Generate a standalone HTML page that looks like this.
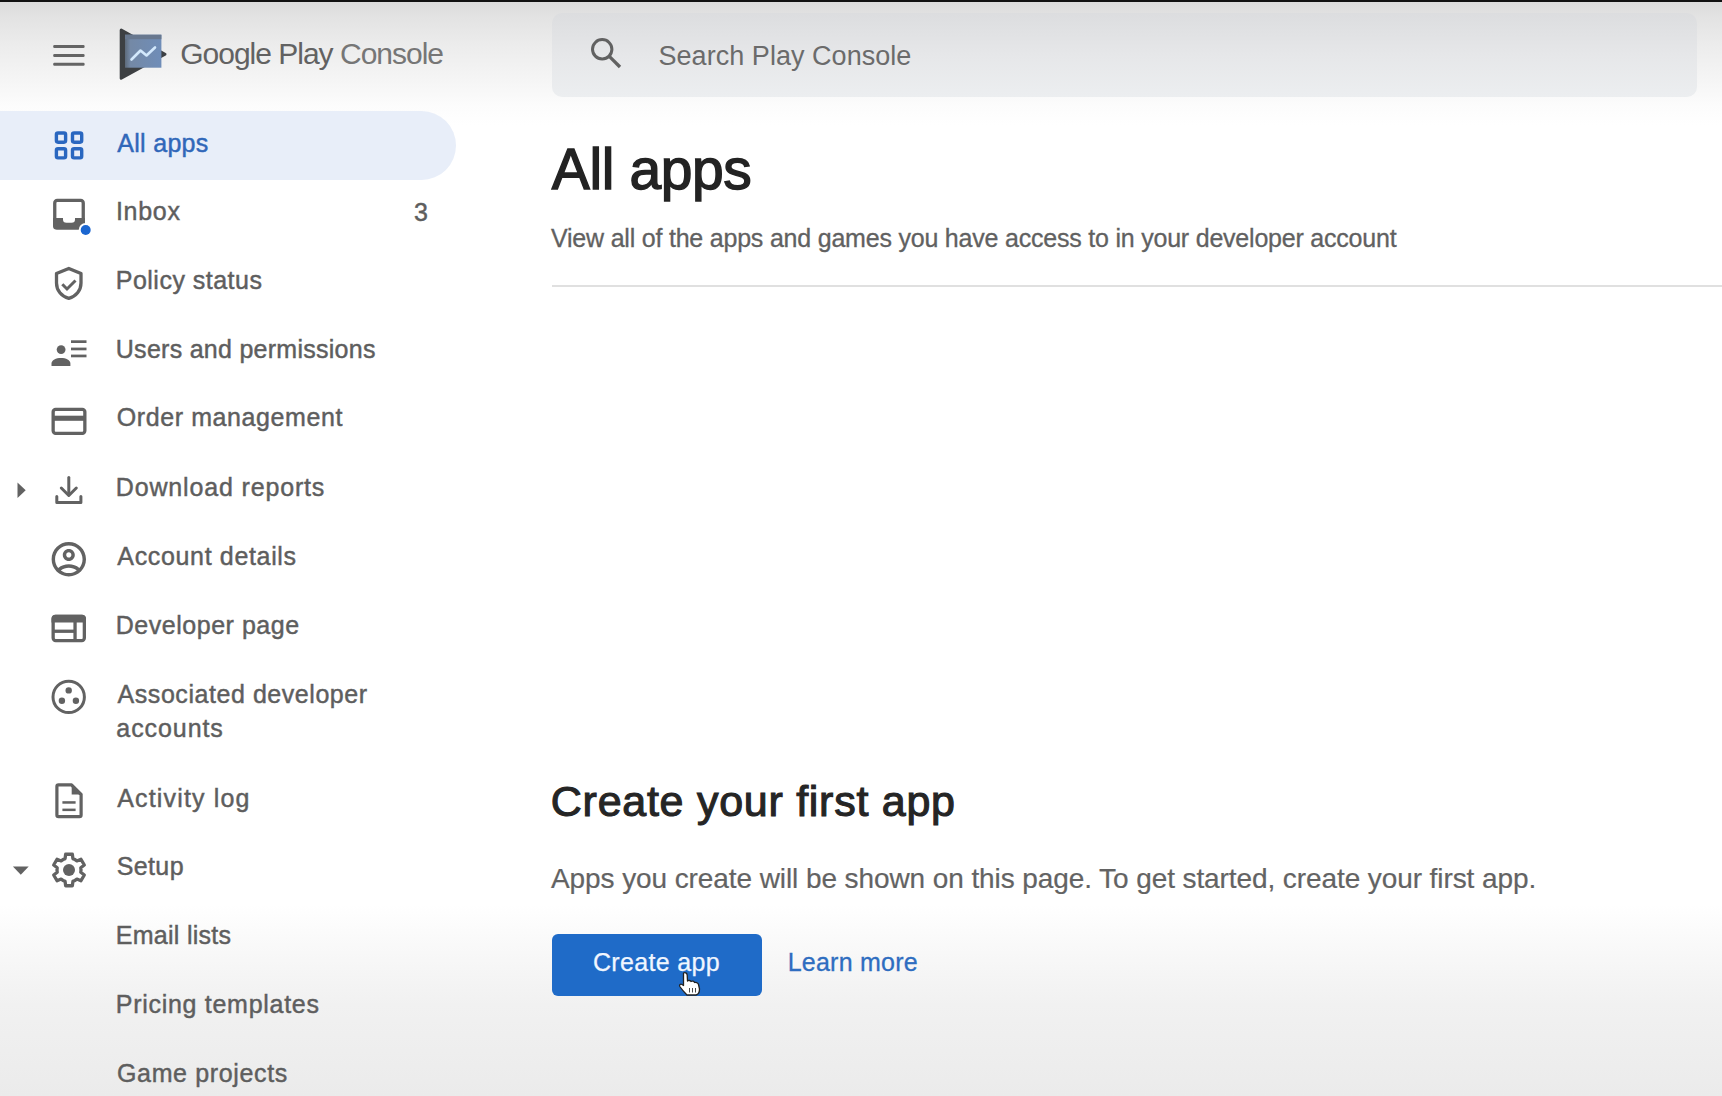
<!DOCTYPE html>
<html><head><meta charset="utf-8">
<style>
html,body{margin:0;padding:0;}
body{width:1722px;height:1096px;position:relative;overflow:hidden;background:#fff;font-family:"Liberation Sans",sans-serif;}
.t{position:absolute;white-space:nowrap;line-height:1;}
#topgrad{position:absolute;left:0;top:0;width:1722px;height:125px;background:linear-gradient(to bottom,#dadada 0px,#e2e2e2 15px,#ececec 45px,#f5f5f5 80px,#fcfcfc 105px,#ffffff 125px);}
#botgrad{position:absolute;left:0;top:905px;width:1722px;height:191px;background:linear-gradient(to bottom,#ffffff 0px,#f9f9f9 40px,#f1f1f1 100px,#ebebeb 191px);}
#topline{position:absolute;left:0;top:0;width:1722px;height:2px;background:#111;}
#search{position:absolute;left:552px;top:13px;width:1145px;height:84px;border-radius:10px;background:linear-gradient(to bottom,#dcdddf,#e6e7e9 50%,#eceef0);}
#pill{position:absolute;left:0;top:111px;width:456px;height:69px;border-radius:0 35px 35px 0;background:#e8eef9;}
#divider{position:absolute;left:552px;top:285px;width:1170px;height:2px;background:#e0e0e0;}
#btn{position:absolute;left:552px;top:934px;width:210px;height:62px;border-radius:6px;background:#1f6bc8;}
svg{position:absolute;left:0;top:0;}
</style></head><body>
<div id="topgrad"></div>
<div id="botgrad"></div>
<div id="topline"></div>
<div id="search"></div>
<div id="pill"></div>
<div id="divider"></div>
<div id="btn"></div>
<div class="t" style="left:117.3px;top:130.7px;font-size:25px;letter-spacing:0.29px;color:#3067b9;-webkit-text-stroke:0.45px #3067b9">All apps</div>
<div class="t" style="left:115.9px;top:199.0px;font-size:25px;letter-spacing:0.73px;color:#5e5e5e;-webkit-text-stroke:0.45px #5e5e5e">Inbox</div>
<div class="t" style="left:413.9px;top:199.5px;font-size:25px;letter-spacing:0px;color:#5e5e5e;-webkit-text-stroke:0.45px #5e5e5e">3</div>
<div class="t" style="left:115.8px;top:267.7px;font-size:25px;letter-spacing:0.48px;color:#5e5e5e;-webkit-text-stroke:0.45px #5e5e5e">Policy status</div>
<div class="t" style="left:115.8px;top:336.9px;font-size:25px;letter-spacing:0.27px;color:#5e5e5e;-webkit-text-stroke:0.45px #5e5e5e">Users and permissions</div>
<div class="t" style="left:116.8px;top:405.4px;font-size:25px;letter-spacing:0.59px;color:#5e5e5e;-webkit-text-stroke:0.45px #5e5e5e">Order management</div>
<div class="t" style="left:115.8px;top:475.4px;font-size:25px;letter-spacing:0.84px;color:#5e5e5e;-webkit-text-stroke:0.45px #5e5e5e">Download reports</div>
<div class="t" style="left:117.3px;top:544.2px;font-size:25px;letter-spacing:0.66px;color:#5e5e5e;-webkit-text-stroke:0.45px #5e5e5e">Account details</div>
<div class="t" style="left:115.8px;top:612.6px;font-size:25px;letter-spacing:0.52px;color:#5e5e5e;-webkit-text-stroke:0.45px #5e5e5e">Developer page</div>
<div class="t" style="left:117.6px;top:681.5px;font-size:25px;letter-spacing:0.55px;color:#5e5e5e;-webkit-text-stroke:0.45px #5e5e5e">Associated developer</div>
<div class="t" style="left:116.3px;top:716.4px;font-size:25px;letter-spacing:0.93px;color:#5e5e5e;-webkit-text-stroke:0.45px #5e5e5e">accounts</div>
<div class="t" style="left:117.3px;top:785.7px;font-size:25px;letter-spacing:1.15px;color:#5e5e5e;-webkit-text-stroke:0.45px #5e5e5e">Activity log</div>
<div class="t" style="left:116.8px;top:854.2px;font-size:25px;letter-spacing:0.35px;color:#5e5e5e;-webkit-text-stroke:0.45px #5e5e5e">Setup</div>
<div class="t" style="left:115.7px;top:923.0px;font-size:25px;letter-spacing:0.29px;color:#5e5e5e;-webkit-text-stroke:0.45px #5e5e5e">Email lists</div>
<div class="t" style="left:115.8px;top:992.1px;font-size:25px;letter-spacing:0.71px;color:#5e5e5e;-webkit-text-stroke:0.45px #5e5e5e">Pricing templates</div>
<div class="t" style="left:117.0px;top:1061.0px;font-size:25px;letter-spacing:0.65px;color:#5e5e5e;-webkit-text-stroke:0.45px #5e5e5e">Game projects</div>
<div class="t" style="left:551.8px;top:141.2px;font-size:57px;letter-spacing:-0.4px;color:#232323;-webkit-text-stroke:1.4px #232323">All apps</div>
<div class="t" style="left:551.0px;top:226.2px;font-size:25px;letter-spacing:-0.21px;color:#616161;-webkit-text-stroke:0.3px #616161">View all of the apps and games you have access to in your developer account</div>
<div class="t" style="left:550.8px;top:780.3px;font-size:43px;letter-spacing:0.73px;color:#252525;-webkit-text-stroke:1.1px #252525">Create your first app</div>
<div class="t" style="left:551.0px;top:864.9px;font-size:28px;letter-spacing:-0.09px;color:#636363;-webkit-text-stroke:0.2px #636363">Apps you create will be shown on this page. To get started, create your first app.</div>
<div class="t" style="left:592.9px;top:950.1px;font-size:25px;letter-spacing:0.33px;color:#f0f6ff;-webkit-text-stroke:0.25px #f0f6ff">Create app</div>
<div class="t" style="left:787.7px;top:950.0px;font-size:25px;letter-spacing:0.23px;color:#2e6dc0;-webkit-text-stroke:0.3px #2e6dc0">Learn more</div>
<div class="t" style="left:180.2px;top:38.7px;font-size:30px;letter-spacing:-1.0px;color:#626262;-webkit-text-stroke:0px #626262">Google Play <span style="color:#767676;-webkit-text-stroke:0px">Console</span></div>
<div class="t" style="left:658.5px;top:42.6px;font-size:27px;letter-spacing:0.04px;color:#6b6b6b;-webkit-text-stroke:0px #6b6b6b">Search Play Console</div>

<svg width="1722" height="1096" viewBox="0 0 1722 1096">
<g fill="#646464">
<rect x="53.2" y="45" width="31.4" height="3" rx="1.2"/>
<rect x="53.2" y="54" width="31.4" height="3" rx="1.2"/>
<rect x="53.2" y="62.7" width="31.4" height="3" rx="1.2"/>
</g>
<!-- logo -->
<defs><linearGradient id="lg" x1="0" x2="1" y1="0" y2="0"><stop offset="0" stop-color="#5d6a7a"/><stop offset="0.15" stop-color="#7489a6"/><stop offset="1" stop-color="#6f8db8"/></linearGradient></defs>
<polygon points="121.2,30 165,54.2 121.2,78.3" fill="#3d4043" stroke="#3d4043" stroke-width="3" stroke-linejoin="round"/>
<rect x="125" y="34.7" width="36.4" height="33" fill="url(#lg)"/>
<rect x="125" y="34.7" width="36.4" height="4.5" fill="#68788f"/>
<polyline points="131.5,59.5 140.5,50.5 146.5,55.5 155,47.5" fill="none" stroke="#d2e8fc" stroke-width="2.6" stroke-linejoin="round" stroke-linecap="round"/>
<!-- search -->
<circle cx="602.2" cy="49.3" r="9.7" fill="none" stroke="#616161" stroke-width="3"/>
<line x1="609.3" y1="56.4" x2="620" y2="67" stroke="#616161" stroke-width="3.3"/>
<!-- all apps grid -->
<g fill="none" stroke="#2a67c0" stroke-width="3.4">
<rect x="56.4" y="133" width="9.2" height="9.2" rx="1.6"/>
<rect x="72.5" y="133" width="9.2" height="9.2" rx="1.6"/>
<rect x="56.4" y="148.7" width="9.2" height="9.2" rx="1.6"/>
<rect x="72.5" y="148.7" width="9.2" height="9.2" rx="1.6"/>
</g>
<g fill="#626262" stroke="#626262">
<!-- inbox -->
<rect x="54.75" y="200.45" width="28.5" height="27.3" rx="2.5" fill="none" stroke-width="3.3"/>
<path d="M53.1 217.9 H63 V219.5 Q63 222.8 66.5 222.8 H71.5 Q75 222.8 75 219.5 V217.9 H84.9 V226.4 Q84.9 229.4 81.9 229.4 H56.1 Q53.1 229.4 53.1 226.4 Z" stroke="none"/>
<circle cx="85.7" cy="230" r="7" fill="#fff" stroke="none"/>
<circle cx="85.7" cy="230" r="5" fill="#1b66d0" stroke="none"/>
<!-- shield -->
<path d="M68.8 268.4 L56.5 273.6 V283 C56.5 290.5 61.5 296.5 68.8 298.3 C76 296.5 81 290.5 81 283 V273.6 Z" fill="none" stroke-width="3.3" stroke-linejoin="round"/>
<polyline points="62.3,284.3 67,289 75.5,280.5" fill="none" stroke-width="3"/>
<!-- users -->
<circle cx="61.1" cy="349.6" r="4.4" stroke="none"/>
<path d="M51.5 366 V363.5 C51.5 359.8 56 357.9 61 357.9 C66 357.9 70.4 359.8 70.4 363.5 V366 Z" stroke="none"/>
<rect x="71" y="340.3" width="15.5" height="2.7" stroke="none"/>
<rect x="71" y="347.6" width="15.5" height="2.7" stroke="none"/>
<rect x="71" y="354.6" width="15.5" height="2.7" stroke="none"/>
<!-- card -->
<rect x="53.15" y="409.35" width="31.7" height="24" rx="2.5" fill="none" stroke-width="3.3"/>
<rect x="52" y="415.7" width="34" height="5.1" stroke="none"/>
<!-- download -->
<polygon points="17.5,482.5 25.7,490.2 17.5,497.9" stroke="none"/>
<line x1="68.8" y1="477.5" x2="68.8" y2="494" stroke-width="3" stroke-linecap="round"/>
<polyline points="61.3,488 68.8,495.5 76.3,488" fill="none" stroke-width="3" stroke-linejoin="round" stroke-linecap="round"/>
<polyline points="56.8,496.5 56.8,502.4 80.9,502.4 80.9,496.5" fill="none" stroke-width="3" stroke-linejoin="round" stroke-linecap="round"/>
<!-- account -->
<path transform="translate(48.16,538.56) scale(1.72)" stroke="none" d="M12 2C6.48 2 2 6.48 2 12s4.48 10 10 10 10-4.48 10-10S17.52 2 12 2zM7.35 18.5C8.66 17.56 10.26 17 12 17s3.34.56 4.65 1.5c-1.31.94-2.91 1.5-4.65 1.5s-3.34-.56-4.65-1.5zm10.79-1.38C16.45 15.8 14.32 15 12 15s-4.45.8-6.14 2.12C4.7 15.73 4 13.95 4 12c0-4.42 3.58-8 8-8s8 3.58 8 8c0 1.95-.7 3.73-1.86 5.12zM12 6c-1.93 0-3.5 1.57-3.5 3.5S10.07 13 12 13s3.5-1.57 3.5-3.5S13.93 6 12 6zm0 5c-.83 0-1.5-.67-1.5-1.5S11.17 8 12 8s1.5.67 1.5 1.5S12.83 11 12 11z"/>
<!-- developer page -->
<rect x="53.15" y="616.45" width="31.2" height="24.1" rx="2.5" fill="none" stroke-width="3.3"/>
<path d="M51.5 622.4 V618.8 Q51.5 614.8 55.5 614.8 H82 Q86 614.8 86 618.8 V622.4 Z" stroke="none"/>
<rect x="73.4" y="621" width="3.3" height="20" stroke="none"/>
<rect x="53" y="629.6" width="21" height="3.3" stroke="none"/>
<!-- associated -->
<circle cx="68.7" cy="696.9" r="15.7" fill="none" stroke-width="3"/>
<circle cx="68.7" cy="690.4" r="3.2" stroke="none"/>
<circle cx="61.9" cy="700.8" r="3.2" stroke="none"/>
<circle cx="75.9" cy="700.8" r="3.2" stroke="none"/>
<!-- activity log -->
<path d="M58.5 784.8 H71.5 L81.1 794.5 V815.1 Q81.1 816.7 79.5 816.7 H58.5 Q56.9 816.7 56.9 815.1 V786.4 Q56.9 784.8 58.5 784.8 Z" fill="none" stroke-width="3.2" stroke-linejoin="round"/>
<path d="M71.7 783.6 L82.4 794.5 H71.7 Z" stroke="none"/>
<rect x="62.4" y="801.2" width="13.2" height="2.5" stroke="none"/>
<rect x="62.4" y="808.6" width="13.2" height="2.5" stroke="none"/>
<!-- setup -->
<polygon points="12.9,866.5 28.7,866.5 20.8,874.7" stroke="none"/>
<path d="M75.00 859.61 L72.91 858.65 L72.35 854.25 L65.65 854.25 L65.09 858.65 L63.00 859.61 L61.13 860.94 L57.04 859.23 L53.69 865.02 L57.22 867.71 L57.00 870.00 L57.22 872.29 L53.69 874.98 L57.04 880.77 L61.13 879.06 L63.00 880.39 L65.09 881.35 L65.65 885.75 L72.35 885.75 L72.91 881.35 L75.00 880.39 L76.87 879.06 L80.96 880.77 L84.31 874.98 L80.78 872.29 L81.00 870.00 L80.78 867.71 L84.31 865.02 L80.96 859.23 L76.87 860.94 Z" fill="none" stroke-width="3.3" stroke-linejoin="round"/>
<circle cx="69" cy="870" r="6" stroke="none"/>
</g>
<!-- cursor -->
<path d="M683.5 973 C685 972 687 973 687.2 975 L687.5 981 C688.5 980 690.5 980.5 691 981.5 C692 980.8 694 981 694.5 982.5 C695.5 982 698 982.5 698.5 984.5 L699.5 989 C699.5 992 698 994.5 696 995 H687 C685 993 681.5 989 679.8 986.5 C679 985 680.5 983.5 682 984.5 L683.5 985.5 Z" fill="#fff" stroke="#222" stroke-width="1.3" stroke-linejoin="round"/>
<g stroke="#333" stroke-width="0.9"><line x1="689.5" y1="988" x2="689.5" y2="992.5"/><line x1="692.5" y1="988" x2="692.5" y2="992.5"/><line x1="695.5" y1="988" x2="695.5" y2="992.5"/></g>
</svg>
</body></html>
